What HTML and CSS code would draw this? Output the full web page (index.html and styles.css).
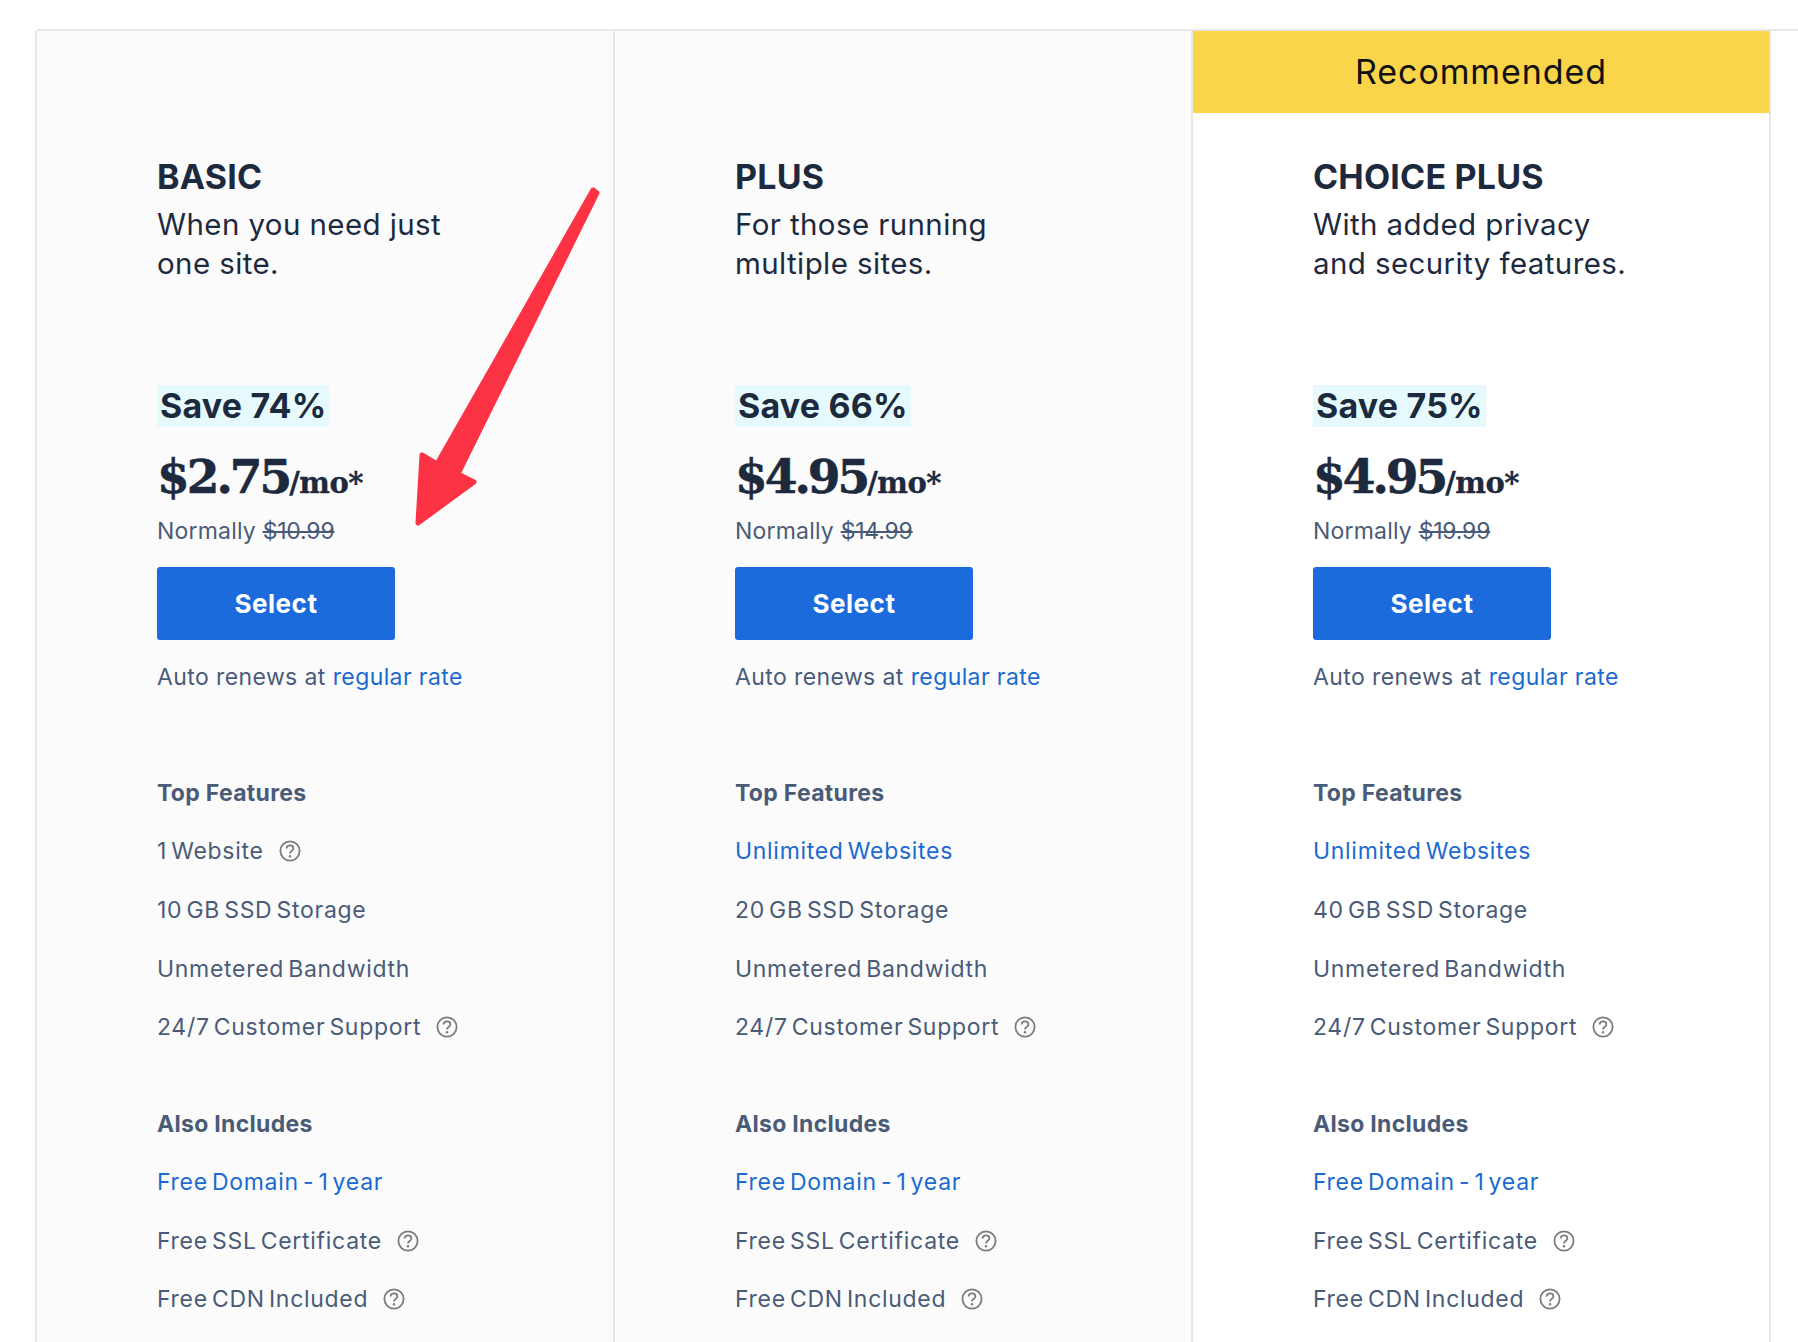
FILE: index.html
```html
<!DOCTYPE html>
<html lang="en">

<head>
    <meta charset="UTF-8">
    <title>Choose a plan</title>
    <link rel="stylesheet" href="styles.css">
</head>

<body>
    <div id="plans">
        <div class="plan">
            <div class="flag"></div>
            <h2 class="name">BASIC</h2>
            <p class="desc">When you need just<br>one site.</p>
            <div class="save"><span>Save 74%</span></div>
            <div class="price">$2.75<small>/mo*</small></div>
            <div class="normal">Normally <s>$10.99</s></div>
            <button class="select">Select</button>
            <div class="renew">Auto renews at <a href="#">regular rate</a></div>
            <h3 class="group first">Top Features</h3>
            <div class="row">1 Website <svg class="help"><use href="#q"></use></svg></div>
            <div class="row">10 GB SSD Storage</div>
            <div class="row">Unmetered Bandwidth</div>
            <div class="row">24/7 Customer Support <svg class="help"><use href="#q"></use></svg></div>
            <h3 class="group">Also Includes</h3>
            <div class="row"><a href="#">Free Domain - 1 year</a></div>
            <div class="row">Free SSL Certificate <svg class="help"><use href="#q"></use></svg></div>
            <div class="row">Free CDN Included <svg class="help"><use href="#q"></use></svg></div>
        </div>

        <div class="plan">
            <div class="flag"></div>
            <h2 class="name">PLUS</h2>
            <p class="desc">For those running<br>multiple sites.</p>
            <div class="save"><span>Save 66%</span></div>
            <div class="price">$4.95<small>/mo*</small></div>
            <div class="normal">Normally <s>$14.99</s></div>
            <button class="select">Select</button>
            <div class="renew">Auto renews at <a href="#">regular rate</a></div>
            <h3 class="group first">Top Features</h3>
            <div class="row"><a href="#">Unlimited Websites</a></div>
            <div class="row">20 GB SSD Storage</div>
            <div class="row">Unmetered Bandwidth</div>
            <div class="row">24/7 Customer Support <svg class="help"><use href="#q"></use></svg></div>
            <h3 class="group">Also Includes</h3>
            <div class="row"><a href="#">Free Domain - 1 year</a></div>
            <div class="row">Free SSL Certificate <svg class="help"><use href="#q"></use></svg></div>
            <div class="row">Free CDN Included <svg class="help"><use href="#q"></use></svg></div>
        </div>

        <div class="plan best">
            <div class="flag">Recommended</div>
            <h2 class="name">CHOICE PLUS</h2>
            <p class="desc">With added privacy<br>and security features.</p>
            <div class="save"><span>Save 75%</span></div>
            <div class="price">$4.95<small>/mo*</small></div>
            <div class="normal">Normally <s>$19.99</s></div>
            <button class="select">Select</button>
            <div class="renew">Auto renews at <a href="#">regular rate</a></div>
            <h3 class="group first">Top Features</h3>
            <div class="row"><a href="#">Unlimited Websites</a></div>
            <div class="row">40 GB SSD Storage</div>
            <div class="row">Unmetered Bandwidth</div>
            <div class="row">24/7 Customer Support <svg class="help"><use href="#q"></use></svg></div>
            <h3 class="group">Also Includes</h3>
            <div class="row"><a href="#">Free Domain - 1 year</a></div>
            <div class="row">Free SSL Certificate <svg class="help"><use href="#q"></use></svg></div>
            <div class="row">Free CDN Included <svg class="help"><use href="#q"></use></svg></div>
        </div>

        <!-- red annotation arrow drawn over the first card -->
        <svg class="arrow" width="260" height="380" viewBox="0 0 260 380">
            <path d="M217 9 L221 12 L82 293 L98 301 L42 342 L46 274 L61 283 Z" fill="#fb3344" stroke="#fb3344" stroke-width="5" stroke-linejoin="round"></path>
        </svg>
    </div>

    <svg width="0" height="0" class="defs">
        <symbol id="q" viewBox="0 0 22 22">
            <circle cx="11" cy="11" r="9.6" fill="none" stroke="#7c7c7c" stroke-width="1.8"></circle>
            <path d="M7.6 8.6 C7.6 6.6 9.2 5.4 11 5.4 C12.9 5.4 14.4 6.7 14.4 8.4 C14.4 10.6 11 10.8 11 13.4" fill="none" stroke="#7c7c7c" stroke-width="1.8"></path>
            <circle cx="11" cy="16.2" r="1.2" fill="#7c7c7c"></circle>
        </symbol>
    </svg>
</body>

</html>
```

FILE: styles.css
```css
body {
    font-family: Inter, "Liberation Sans", sans-serif;
    background-color: #fff;
    color: #4a5b78;
    margin: 0;
    padding: 0;
    height: 100vh;
    overflow: hidden;
}

#plans {
    position: relative;
    display: grid;
    grid-template-columns: repeat(3, 578px);
    margin: 29px 0 0 37px;
    height: 1313px;
    border-top: 2px solid #e8e8e8;
}

.plan {
    background-color: #fbfbfb;
    border-right: 2px solid #e6e6e6;
}

.plan:first-child {
    border-left: 2px solid #e6e6e6;
    margin-left: -2px;
}

.plan.best {
    background-color: #fff;
}

.flag {
    height: 82px;
    line-height: 82px;
    text-align: center;
    font-size: 34px;
    letter-spacing: 0.9px;
    color: #111;
}

.best .flag {
    background-color: #fad54a;
}

.name,
.desc,
.save,
.price,
.normal,
.select,
.renew,
.group,
.row {
    margin-left: 120px;
}

.name {
    margin-top: 43px;
    margin-bottom: 0;
    font-size: 34px;
    line-height: 42px;
    font-weight: 700;
    letter-spacing: 0.2px;
    color: #1d2a3e;
}

.desc {
    margin-top: 7px;
    margin-bottom: 0;
    font-size: 29.5px;
    line-height: 39px;
    letter-spacing: 0.4px;
    color: #1d2a3e;
}

.save {
    margin-top: 102px;
    height: 42px;
}

.save span {
    display: inline-block;
    padding: 0 3px;
    font-size: 34px;
    line-height: 42px;
    font-weight: 700;
    letter-spacing: 0.2px;
    color: #1d2a3e;
    background-color: #e6fafe;
}

.price {
    margin-top: 19px;
    height: 62px;
    font-family: "DejaVu Serif", serif;
    font-size: 47px;
    line-height: 62px;
    font-weight: 700;
    letter-spacing: -3px;
    color: #1d2a3e;
    -webkit-text-stroke: 0.6px #1d2a3e;
}

.price small {
    font-size: 29px;
    letter-spacing: -0.5px;
    -webkit-text-stroke: 0.3px #1d2a3e;
}

.normal {
    margin-top: 8px;
    font-size: 23px;
    line-height: 30px;
    letter-spacing: 0.2px;
}

.normal s {
    letter-spacing: -0.2px;
}

.select {
    display: block;
    margin-top: 21px;
    width: 238px;
    height: 73px;
    border: none;
    border-radius: 3px;
    background-color: #1b6bdc;
    color: #fff;
    font-family: inherit;
    font-size: 26px;
    font-weight: 700;
    letter-spacing: 0.5px;
}

.renew {
    margin-top: 22px;
    font-size: 23px;
    line-height: 30px;
    letter-spacing: 0.4px;
}

a {
    color: #1b6ad0;
    text-decoration: none;
}

.group {
    margin-top: 52px;
    margin-bottom: 0;
    font-size: 23px;
    line-height: 30px;
    font-weight: 700;
    letter-spacing: 0.3px;
    color: #4a5b78;
}

.group.first {
    margin-top: 86px;
}

.row {
    display: flex;
    align-items: center;
    height: 58.7px;
    font-size: 23px;
    letter-spacing: 0.7px;
    word-spacing: -3px;
}

.group + .row {
    margin-top: 14px;
}

.help {
    width: 22px;
    height: 22px;
    margin-left: 15px;
}

.defs {
    position: absolute;
}

.arrow {
    position: absolute;
    left: 339px;
    top: 150px;
    pointer-events: none;
}
```
